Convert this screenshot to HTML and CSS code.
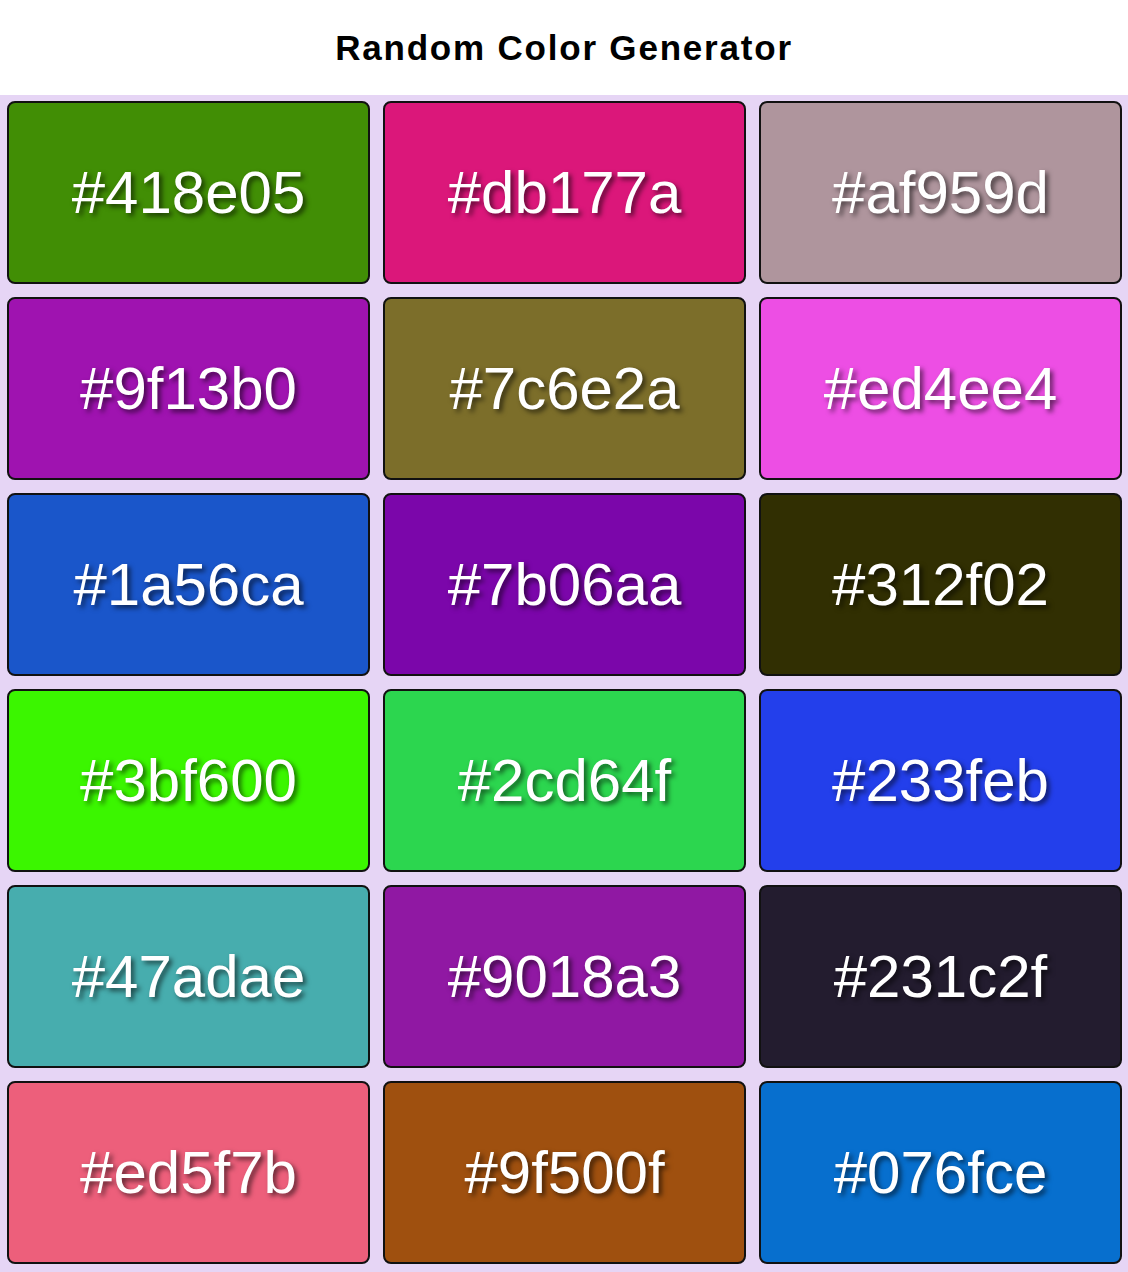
FILE: index.html
```html
<!DOCTYPE html>
<html lang="en">
<head>
<meta charset="utf-8">
<title>Random Color Generator</title>
<link rel="stylesheet" href="styles.css">
</head>
<body>
<header class="header">
  <h1 class="title">Random Color Generator</h1>
</header>
<main class="palette">
  <div class="swatch" style="background:#418e05">#418e05</div>
  <div class="swatch" style="background:#db177a">#db177a</div>
  <div class="swatch" style="background:#af959d">#af959d</div>
  <div class="swatch" style="background:#9f13b0">#9f13b0</div>
  <div class="swatch" style="background:#7c6e2a">#7c6e2a</div>
  <div class="swatch" style="background:#ed4ee4">#ed4ee4</div>
  <div class="swatch" style="background:#1a56ca">#1a56ca</div>
  <div class="swatch" style="background:#7b06aa">#7b06aa</div>
  <div class="swatch" style="background:#312f02">#312f02</div>
  <div class="swatch" style="background:#3bf600">#3bf600</div>
  <div class="swatch" style="background:#2cd64f">#2cd64f</div>
  <div class="swatch" style="background:#233feb">#233feb</div>
  <div class="swatch" style="background:#47adae">#47adae</div>
  <div class="swatch" style="background:#9018a3">#9018a3</div>
  <div class="swatch" style="background:#231c2f">#231c2f</div>
  <div class="swatch" style="background:#ed5f7b">#ed5f7b</div>
  <div class="swatch" style="background:#9f500f">#9f500f</div>
  <div class="swatch" style="background:#076fce">#076fce</div>
</main>
</body>
</html>
```
FILE: styles.css
```css
html, body {
  margin: 0;
  padding: 0;
  background: #ffffff;
  font-family: "Liberation Sans", Arial, sans-serif;
}

.header {
  height: 95px;
  display: flex;
  align-items: center;
  justify-content: center;
}

.title {
  margin: 0;
  font-size: 35px;
  font-weight: bold;
  letter-spacing: 1.8px;
  color: #000;
}

.palette {
  background: #e6d5f5;
  padding: 6px 6px 8px 7px;
  display: grid;
  grid-template-columns: repeat(3, 1fr);
  gap: 13px;
}

.swatch {
  height: 179px;
  border: 2px solid #111;
  border-radius: 8px;
  display: flex;
  align-items: center;
  justify-content: center;
  color: #fff;
  font-size: 60px;
  text-shadow: 3px 3px 5px rgba(0, 0, 0, 0.6);
}
```
